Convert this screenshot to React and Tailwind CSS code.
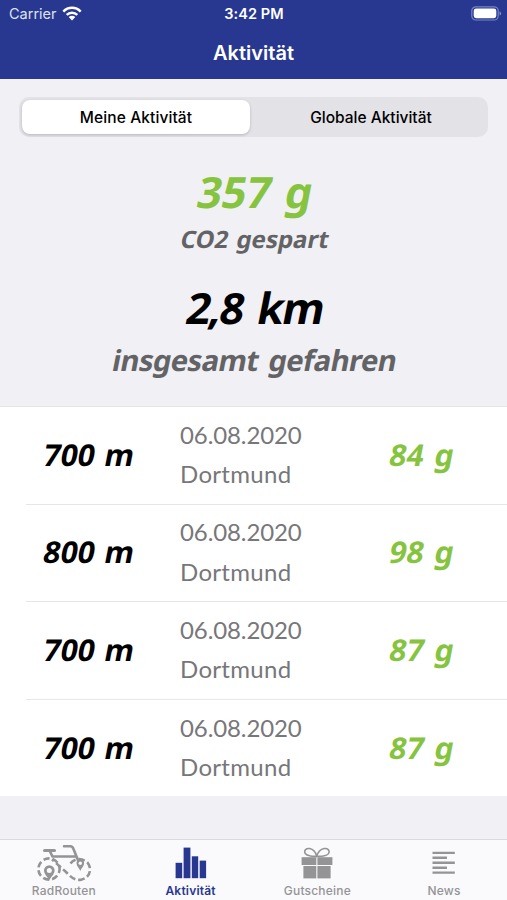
import { useState } from "react";

const activities = [
  { id: 1, distance: "700 m", date: "06.08.2020", city: "Dortmund", saved: "84 g" },
  { id: 2, distance: "800 m", date: "06.08.2020", city: "Dortmund", saved: "98 g" },
  { id: 3, distance: "700 m", date: "06.08.2020", city: "Dortmund", saved: "87 g" },
  { id: 4, distance: "700 m", date: "06.08.2020", city: "Dortmund", saved: "87 g" },
];

const WifiIcon = () => (
  <svg width="20" height="15" viewBox="0 0 20 15" fill="none" stroke="currentColor" strokeWidth="2.5">
    <path d="M1.3 5.6C6.2 0.6 13.8 0.6 18.7 5.6" />
    <path d="M4.7 8.9C7.7 6 12.3 6 15.3 8.9" />
    <path d="M10 14.4L6.7 11C8.6 9.3 11.4 9.3 13.3 11Z" fill="currentColor" stroke="none" />
  </svg>
);

const BatteryIcon = () => (
  <svg width="31" height="15" viewBox="0 0 31 15" fill="none">
    <rect x="0.8" y="0.8" width="26.4" height="13.2" rx="4" stroke="#7a84c0" strokeWidth="1.2" />
    <rect x="2.7" y="2.6" width="22.6" height="9.6" rx="2.4" fill="white" />
    <path d="M28.6 5.2C30.6 6 30.6 8.8 28.6 9.6Z" fill="#8c95cb" />
  </svg>
);

const BikeIcon = () => (
  <svg width="56" height="38" viewBox="0 0 56 38" fill="none" stroke="currentColor" strokeWidth="2.6">
    <circle cx="13" cy="25" r="10.6" strokeDasharray="6.2 3" strokeDashoffset="2" />
    <path d="M34.5 19.5C38 14 47 13.5 51.8 19C56.5 25.5 53.5 34 45 35.7C38 36.8 34 32 30 28L16 15.5" strokeDasharray="6.4 3" />
    <path d="M8.5 6.5H18.5" strokeWidth="3" strokeLinecap="round" />
    <path d="M14 7.5L16.5 12.5H40M28 2.3H34.5C36.5 2.3 37 3.5 37.5 5L42.3 17" strokeLinecap="round" />
    <path
      d="M13.3 36.5C11.5 32.5 8 30.2 8 26.5A5.3 5.3 0 0 1 18.6 26.5C18.6 30.2 15 32.5 13.3 36.5Z"
      fill="currentColor"
      stroke="none"
    />
    <circle cx="13.3" cy="26.4" r="2.5" fill="#fafafc" stroke="none" />
    <path
      d="M44.3 27C43 23.8 40.5 22 40.5 19.3A3.8 3.8 0 0 1 48.1 19.3C48.1 22 45.6 23.8 44.3 27Z"
      fill="currentColor"
      stroke="none"
    />
    <circle cx="44.3" cy="19.3" r="1.7" fill="#fafafc" stroke="none" />
  </svg>
);

const ChartIcon = () => (
  <svg width="32" height="32" viewBox="0 0 32 32" fill="currentColor">
    <rect x="0.6" y="15.8" width="6.6" height="15.4" />
    <rect x="8.6" y="0.6" width="6.8" height="30.6" />
    <rect x="16.8" y="9.3" width="6.4" height="21.9" />
    <rect x="24.7" y="13.6" width="6.4" height="17.6" />
  </svg>
);

const GiftIcon = () => (
  <svg width="32" height="32" viewBox="0 0 32 32" fill="currentColor">
    <path
      d="M15.8 9C12.5 9.5 6 9.3 4.2 6.5C2.5 3.2 5.5 1 8.7 1.6C12.5 2.4 14.8 6 15.8 9C16.8 6 19.5 2.4 23 1.6C26.5 1 29.2 3.2 27.6 6.5C26 9.3 19.2 9.5 15.8 9Z"
      fill="none"
      stroke="currentColor"
      strokeWidth="1.5"
    />
    <rect x="0.6" y="10.2" width="14.7" height="7.8" />
    <rect x="16.4" y="10.2" width="15" height="7.8" />
    <rect x="2.4" y="19" width="12.9" height="12.4" />
    <rect x="16.4" y="19" width="13.2" height="12.4" />
  </svg>
);

const NewsIcon = () => (
  <svg width="24" height="24" viewBox="0 0 24 24" stroke="currentColor" strokeWidth="2.4">
    <path d="M0.5 1.9H22.8M0.5 6.8H15M0.5 11.8H22.8M0.5 16.7H15M0.5 21.6H22.8" />
  </svg>
);

const tabs = [
  { name: "RadRouten", icon: BikeIcon },
  { name: "Aktivität", icon: ChartIcon },
  { name: "Gutscheine", icon: GiftIcon },
  { name: "News", icon: NewsIcon },
];

export default function App() {
  const [scope, setScope] = useState("mine");
  const [activeTab, setActiveTab] = useState("Aktivität");

  return (
    <div className="flex h-[900px] w-[507px] flex-col overflow-hidden bg-[#f0f0f5] font-['Inter',sans-serif]">
      <header className="h-[79px] bg-[#283891] text-white">
        <div className="grid h-[27px] grid-cols-3 items-center pl-[9px] pr-[5px]">
          <div className="flex items-center gap-[5px] text-[14.5px] text-[#dfe2f2]">
            Carrier
            <span className="text-white">
              <WifiIcon />
            </span>
          </div>
          <div className="pr-[3px] text-center text-[14.5px] font-semibold tracking-[0.1px]">3:42 PM</div>
          <div className="flex justify-end">
            <BatteryIcon />
          </div>
        </div>
        <h1 className="pt-[12px] text-center text-[20px] font-semibold leading-7">Aktivität</h1>
      </header>

      {/* Segmented control */}
      <div className="mx-[19px] mt-[18px] flex h-[40px] rounded-[10px] bg-[#e3e2e7] p-[3px] text-[15.5px] font-medium text-black">
        <button
          onClick={() => setScope("mine")}
          className={`w-[228px] rounded-[8px] pt-[2px] tracking-[0.1px] ${scope === "mine" ? "bg-white shadow-[0_1px_3px_rgba(0,0,0,0.2)]" : ""}`}
        >
          Meine Aktivität
        </button>
        <button
          onClick={() => setScope("global")}
          className={`ml-[7px] flex-1 rounded-[8px] pt-[2px] ${scope === "global" ? "bg-white shadow-[0_1px_3px_rgba(0,0,0,0.2)]" : ""}`}
        >
          Globale Aktivität
        </button>
      </div>

      {/* Totals, slanted upright letters */}
      <section className="flex h-[269px] flex-col items-center pt-[31px] pl-[4px] font-['Noto_Sans',sans-serif] font-bold">
        <p className="-skew-x-[11deg] text-[43px] leading-[48px] text-[#86c440] [word-spacing:3px]">357 g</p>
        <p className="mt-[9px] -skew-x-[11deg] text-[24px] leading-7 text-[#636366] [word-spacing:2px]">CO2 gespart</p>
        <p className="mt-[31px] -skew-x-[11deg] text-[43px] leading-[48px] tracking-[-1.6px] text-black [word-spacing:5px]">
          2,8 km
        </p>
        <p className="mt-[10px] -skew-x-[11deg] pr-[2px] text-[29px] leading-9 tracking-[-0.5px] text-[#636366] [word-spacing:3px]">
          insgesamt gefahren
        </p>
      </section>

      <ul className="border-t border-[#e4e4e8] bg-white font-['Lato',sans-serif]">
        {activities.map((item, i) => (
          <li key={item.id} className="pl-[26px]">
            <div
              className={`flex items-center ${i < activities.length - 1 ? "h-[97.5px] border-b border-[#e6e6e8] pb-[2px]" : "h-[96.5px] pb-px"}`}
            >
              <p className="w-[154px] -skew-x-[11deg] pt-px pl-[18px] font-['Noto_Sans',sans-serif] text-[30px] font-bold leading-9 text-black [word-spacing:2px]">
                {item.distance}
              </p>
              <div className="w-[210px] text-[24px] leading-[39.5px] text-[#77777a]">
                <p className="tracking-[-0.1px]">{item.date}</p>
                <p className="tracking-[0.3px]">{item.city}</p>
              </div>
              <p className="-skew-x-[11deg] pt-px font-['Noto_Sans',sans-serif] text-[30px] font-bold leading-9 text-[#86c440] [word-spacing:3px]">
                {item.saved}
              </p>
            </div>
          </li>
        ))}
      </ul>

      <nav className="mt-auto grid h-[61px] grid-cols-4 border-t border-[#d9d9de] bg-[#fafafc]">
        {tabs.map(({ name, icon: Icon }) => (
          <button
            key={name}
            onClick={() => setActiveTab(name)}
            className={`flex flex-col items-center text-[12px] tracking-[0.2px] ${
              activeTab === name ? "font-semibold text-[#283891]" : "font-medium text-[#949496]"
            }`}
          >
            <span className="flex h-[44px] items-center justify-center pt-[2px] pl-px">
              <Icon />
            </span>
            <span className="pl-px leading-[14px]">{name}</span>
          </button>
        ))}
      </nav>
    </div>
  );
}
